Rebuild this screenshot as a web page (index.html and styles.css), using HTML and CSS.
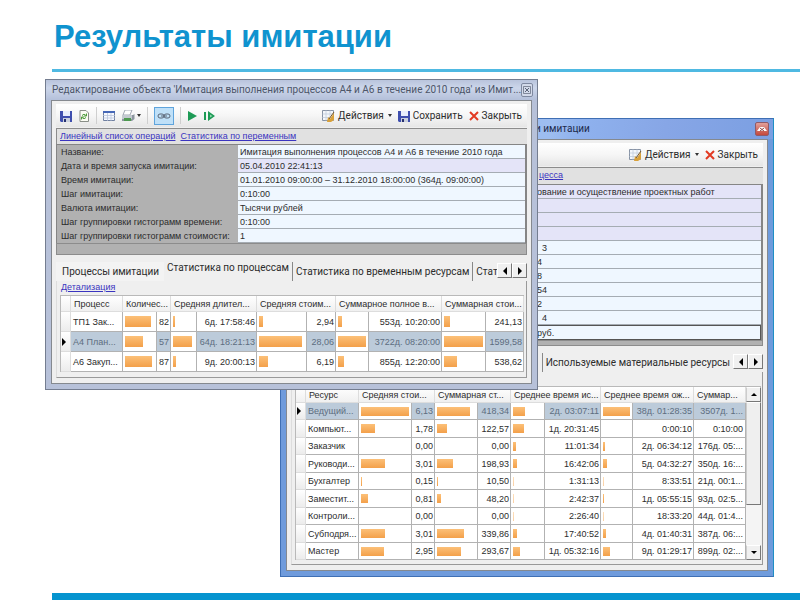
FILE: index.html
```
<!DOCTYPE html>
<html lang="ru">
<head>
<meta charset="utf-8">
<title>Результаты имитации</title>
<link rel="stylesheet" href="styles.css">
</head>
<body>
<svg class="sprite" aria-hidden="true">
  <symbol id="save" viewBox="0 0 12 12"><path d="M0 1h12v11H1L0 11z" fill="#3f4fae"/><path d="M3 1h7v5H3z" fill="#e8eefc"/><path d="M3 8h7v4H3z" fill="#c9cfdd"/><path d="M4 9h2v3H4z" fill="#26306f"/></symbol>
  <symbol id="refresh" viewBox="0 0 12 12"><path d="M2 .5h6l2.500 2.500v8.500H2z" fill="#fbfcf4" stroke="#8a8f88"/><path d="M4 5.500q2-2.500 4 0M8.500 3.500v2.500H6M8 7.500q-2 2.500-4 0M3.500 9.500V7H6" fill="none" stroke="#4c9a3a"/></symbol>
  <symbol id="grid" viewBox="0 0 12 12"><path d="M.5 1.500h11v9H.5z" fill="#f6f9ff" stroke="#6f7f9f"/><path d="M0 1h12v2H0z" fill="#4668b8"/><path d="M4.500 3v8M8 3v8M0 5.500h12M0 8h12" stroke="#b4c0d8" stroke-width=".7"/></symbol>
  <symbol id="print" viewBox="0 0 14 12"><path d="M4 0h7l-2 5H2z" fill="#fff" stroke="#8b93a1" stroke-width=".8"/><path d="M1 5h11l1.500-1v5L11 11H1z" fill="#8d96a0"/><path d="M1 5h10v4H1z" fill="#c3cad0"/><path d="M3 8h7v3H3z" fill="#4e9a50"/></symbol>
  <symbol id="link" viewBox="0 0 14 8"><rect x="1" y="2" width="6" height="4" rx="2" fill="none" stroke="#5b6677"/><rect x="7" y="2" width="6" height="4" rx="2" fill="none" stroke="#5b6677"/><path d="M4 4h6" stroke="#5b6677"/></symbol>
  <symbol id="play" viewBox="0 0 10 10"><path d="M1 0l9 5-9 5z" fill="#1d9a55"/></symbol>
  <symbol id="step" viewBox="0 0 12 10"><path d="M1 1h2v8H1zM5 0l7 5-7 5z" fill="#1d9a55"/><path d="M7 3.500L9.500 5 7 6.500z" fill="#8fd8ae"/></symbol>
  <symbol id="actions" viewBox="0 0 13 12"><path d="M.5 .5h11v10H.5z" fill="#f4f7fb" stroke="#8793a5"/><path d="M.5 4h11M.5 7.500h11M4 .5v10M8 .5v10" stroke="#c2cddd" stroke-width=".8"/><path d="M6 7l2 2 4-6v7l-3 2H5z" fill="#d9a13a"/><path d="M12 2L7 9" stroke="#7a5a2c"/></symbol>
  <symbol id="cross" viewBox="0 0 10 10"><path d="M1 1l8 8M9 1L1 9" stroke="#e23a22" stroke-width="2"/></symbol>
  <symbol id="frame-close" viewBox="0 0 8 8"><path d="M.5 .5h7v7h-7z" fill="none" stroke="#5b6477" stroke-width=".7"/><path d="M2 2l4 4M6 2L2 6" stroke="#5b6477"/></symbol>
  <symbol id="frame-close-active" viewBox="0 0 10 6"><path d="M0 5L3 1h4l3 4z" fill="#fff"/><path d="M3 2l4 3M7 2L3 5" stroke="#8d4a48"/></symbol>
</svg>

<div class="slide">
  <h1>Результаты имитации</h1>
  <main class="stage">

    <section class="window back">
      <header class="titlebar">
        <span class="caption">и имитации</span>
        <button class="close" aria-label="Закрыть окно"><svg width="10" height="6"><use href="#frame-close-active"/></svg></button>
      </header>
      <div class="client">
        <div class="toolbar">
          <div class="commands">
            <button><svg width="13" height="12"><use href="#actions"/></svg>Действия<i class="caret"></i></button>
            <button><svg width="10" height="10"><use href="#cross"/></svg>Закрыть</button>
          </div>
        </div>
        <nav class="links"><a href="#">цесса</a></nav>
        <table class="props">
          <tr class="fixed"><th></th><td>ование и осуществление проектных работ</td></tr>
          <tr class="fixed"><th></th><td></td></tr>
          <tr class="fixed"><th></th><td></td></tr>
          <tr class="fixed"><th></th><td></td></tr>
          <tr><th></th><td>&nbsp;&nbsp;3</td></tr>
          <tr><th></th><td>4</td></tr>
          <tr><th></th><td>8</td></tr>
          <tr><th></th><td>54</td></tr>
          <tr><th></th><td>2</td></tr>
          <tr><th></th><td>&nbsp;&nbsp;4</td></tr>
          <tr class="current"><th></th><td>руб.</td></tr>
        </table>
        <div class="filler"></div>
        <div class="tabs">
          <button class="divided">Используемые материальные ресурсы</button>
          <div class="scroller"><button aria-label="Назад"><i class="left"></i></button><button aria-label="Вперёд"><i class="right"></i></button></div>
        </div>
        <div class="page">
          <div class="sheet">
            <table class="data">
              <colgroup><col class="w10"><col class="w53"><col class="w53"><col class="w23"><col class="w43"><col class="w33"><col class="w34"><col class="w56"><col class="w32"><col class="w61"><col></colgroup>
              <thead><tr><th></th><th>Ресурс</th><th colspan="2">Средняя стои...</th><th colspan="2">Суммарная ст...</th><th colspan="2">Среднее время ис...</th><th colspan="2">Среднее время ож...</th><th>Суммар...</th></tr></thead>
              <tbody>
                <tr class="selected"><td><i class="marker"></i></td><td>Ведущий...</td><td><b style="width:48px"></b></td><td>6,13</td><td><b style="width:33px"></b></td><td>418,34</td><td><b style="width:12px"></b></td><td>2д. 03:07:11</td><td><b style="width:27px"></b></td><td>38д. 01:28:35</td><td>3507д. 1...</td></tr>
                <tr><td></td><td>Компьют...</td><td><b style="width:14px"></b></td><td>1,78</td><td><b style="width:10px"></b></td><td>122,57</td><td><b style="width:11px"></b></td><td>1д. 20:31:45</td><td></td><td>0:00:10</td><td>0:10:00</td></tr>
                <tr><td></td><td>Заказчик</td><td></td><td>0,00</td><td></td><td>0,00</td><td><b style="width:3px"></b></td><td>11:01:34</td><td><b style="width:2px"></b></td><td>2д. 06:34:12</td><td>176д. 05:...</td></tr>
                <tr><td></td><td>Руководи...</td><td><b style="width:24px"></b></td><td>3,01</td><td><b style="width:16px"></b></td><td>198,93</td><td><b style="width:4px"></b></td><td>16:42:06</td><td><b style="width:4px"></b></td><td>5д. 04:32:27</td><td>350д. 16:...</td></tr>
                <tr><td></td><td>Бухгалтер</td><td><b style="width:1px"></b></td><td>0,15</td><td><b style="width:1px"></b></td><td>10,50</td><td><b class="faint" style="width:1px"></b></td><td>1:31:13</td><td><b class="faint" style="width:1px"></b></td><td>8:33:51</td><td>21д. 00:1...</td></tr>
                <tr><td></td><td>Заместит...</td><td><b style="width:7px"></b></td><td>0,81</td><td><b style="width:4px"></b></td><td>48,20</td><td><b class="faint" style="width:1px"></b></td><td>2:42:37</td><td><b style="width:1px"></b></td><td>1д. 05:55:15</td><td>93д. 02:5...</td></tr>
                <tr><td></td><td>Контроли...</td><td></td><td>0,00</td><td></td><td>0,00</td><td><b class="faint" style="width:1px"></b></td><td>2:26:40</td><td><b class="faint" style="width:1px"></b></td><td>18:33:20</td><td>44д. 01:4...</td></tr>
                <tr><td></td><td>Субподря...</td><td><b style="width:24px"></b></td><td>3,01</td><td><b style="width:27px"></b></td><td>339,86</td><td><b style="width:4px"></b></td><td>17:40:52</td><td><b style="width:3px"></b></td><td>4д. 01:40:31</td><td>387д. 06:...</td></tr>
                <tr><td></td><td>Мастер</td><td><b style="width:23px"></b></td><td>2,95</td><td><b style="width:24px"></b></td><td>293,67</td><td><b style="width:7px"></b></td><td>1д. 05:32:16</td><td><b style="width:7px"></b></td><td>9д. 01:29:17</td><td>899д. 02:...</td></tr>
              </tbody>
            </table>
            <div class="scrollbar"><button aria-label="Вверх"><i class="up"></i></button><div class="thumb"></div><div class="track"></div><button aria-label="Вниз"><i class="down"></i></button></div>
          </div>
        </div>
      </div>
    </section>

    <section class="window front">
      <header class="titlebar">
        <span class="caption">Редактирование объекта 'Имитация выполнения процессов А4 и А6 в течение 2010 года' из Имит...</span>
        <button class="close" aria-label="Закрыть окно"><svg width="8" height="8"><use href="#frame-close"/></svg></button>
      </header>
      <div class="client">
        <div class="toolbar">
          <div class="tools">
            <button aria-label="Сохранить"><svg width="12" height="12"><use href="#save"/></svg></button>
            <button aria-label="Обновить"><svg width="12" height="12"><use href="#refresh"/></svg></button>
            <i class="sep"></i>
            <button aria-label="Таблица"><svg width="12" height="12"><use href="#grid"/></svg></button>
            <button aria-label="Печать"><svg width="14" height="12"><use href="#print"/></svg><i class="caret"></i></button>
            <i class="sep"></i>
            <button class="pressed" aria-label="Связь"><svg width="14" height="8"><use href="#link"/></svg></button>
            <i class="sep"></i>
            <button aria-label="Запуск"><svg width="10" height="10"><use href="#play"/></svg></button>
            <button aria-label="Шаг"><svg width="12" height="10"><use href="#step"/></svg></button>
          </div>
          <div class="commands">
            <button><svg width="13" height="12"><use href="#actions"/></svg>Действия<i class="caret"></i></button>
            <button><svg width="12" height="12"><use href="#save"/></svg>Сохранить</button>
            <button><svg width="10" height="10"><use href="#cross"/></svg>Закрыть</button>
          </div>
        </div>
        <nav class="links"><a href="#">Линейный список операций</a><a href="#">Статистика по переменным</a></nav>
        <table class="props">
          <tr><th>Название:</th><td>Имитация выполнения процессов А4 и А6 в течение 2010 года</td></tr>
          <tr class="fixed"><th>Дата и время запуска имитации:</th><td>05.04.2010 22:41:13</td></tr>
          <tr><th>Время имитации:</th><td>01.01.2010 09:00:00 – 31.12.2010 18:00:00 (364д. 09:00:00)</td></tr>
          <tr><th>Шаг имитации:</th><td>0:10:00</td></tr>
          <tr><th>Валюта имитации:</th><td>Тысячи рублей</td></tr>
          <tr><th>Шаг группировки гистограмм времени:</th><td>0:10:00</td></tr>
          <tr><th>Шаг группировки гистограмм стоимости:</th><td>1</td></tr>
        </table>
        <div class="filler"></div>
        <div class="tabs">
          <button class="first">Процессы имитации</button>
          <button class="active">Статистика по процессам</button>
          <button class="divided">Статистика по временным ресурсам</button>
          <button class="divided">Стат</button>
          <div class="scroller"><button aria-label="Назад"><i class="left"></i></button><button aria-label="Вперёд"><i class="right"></i></button></div>
        </div>
        <div class="page">
          <a class="detail" href="#">Детализация</a>
          <div class="sheet">
            <table class="data">
              <colgroup><col class="w10"><col class="w52"><col class="w34"><col class="w14"><col class="w26"><col class="w60"><col class="w50"><col class="w29"><col class="w33"><col class="w73"><col class="w44"><col></colgroup>
              <thead><tr><th></th><th>Процесс</th><th colspan="2">Количес...</th><th colspan="2">Средняя длител...</th><th colspan="2">Средняя стоим...</th><th colspan="2">Суммарное полное в...</th><th colspan="2">Суммарная стои...</th></tr></thead>
              <tbody>
                <tr><td></td><td>ТП1 Зак...</td><td><b style="width:26px"></b></td><td>82</td><td><b style="width:2px"></b></td><td>6д. 17:58:46</td><td><b style="width:4px"></b></td><td>2,94</td><td><b style="width:4px"></b></td><td>553д. 10:20:00</td><td><b style="width:6px"></b></td><td>241,13</td></tr>
                <tr class="selected"><td><i class="marker"></i></td><td>А4 План...</td><td><b style="width:18px"></b></td><td>57</td><td><b style="width:19px"></b></td><td>64д. 18:21:13</td><td><b style="width:43px"></b></td><td>28,06</td><td><b style="width:28px"></b></td><td>3722д. 08:20:00</td><td><b style="width:39px"></b></td><td>1599,58</td></tr>
                <tr><td></td><td>А6 Закуп...</td><td><b style="width:27px"></b></td><td>87</td><td><b style="width:3px"></b></td><td>9д. 20:00:13</td><td><b style="width:9px"></b></td><td>6,19</td><td><b style="width:6px"></b></td><td>855д. 12:20:00</td><td><b style="width:13px"></b></td><td>538,62</td></tr>
              </tbody>
            </table>
          </div>
        </div>
      </div>
    </section>

  </main>
  <footer></footer>
</div>
</body>
</html>
```

FILE: styles.css
```
* { box-sizing: border-box; }
body { margin: 0; background: #fff; font: 9px/12px "Liberation Sans", sans-serif; color: #2c2c2c; }
button { margin: 0; padding: 0; border: 0; background: none; color: inherit; font: inherit; }
svg { display: block; flex: none; }
.sprite { position: absolute; width: 0; height: 0; }

.slide { min-height: 100vh; display: flex; flex-direction: column; }
h1 { margin: 0 0 0 52px; padding: 18px 0 13px 2px; border-bottom: 3px solid #4fb9e2; font-size: 31px; line-height: 38px; color: #0f93cf; }
footer { margin-left: 52px; height: 7px; background: #0594cf; }

.stage { flex: 1; display: grid; grid-template-columns: minmax(0, 1fr); align-items: start; }
.window { grid-area: 1 / 1; padding: 0 5px 5px; border: 1px solid #747d90; }
.front { margin: 7px 262px 0 45px; background: #b7c1d9; }
.back { margin: 46px 26px 16px 280px; background: #6f9bdc; border-color: #3f6fb4; border-right-color: #1f8fc4; }
.titlebar { display: flex; align-items: center; justify-content: space-between; height: 20px; margin: 0 -5px; padding: 0 4px 0 6px; font: 10px/14px Roboto, sans-serif; color: #4c5568; }
.front .titlebar { background: linear-gradient(#b9c4dc, #ccd6ea 40%, #b4c0da); }
.back .titlebar { padding-left: 254px; background: linear-gradient(100deg, #9dbdf0 55%, #8fb2ee 60%, #87a6e6 78%, #7b9fe2); color: #1d2a4c; }
.caption { white-space: nowrap; }
.close { display: flex; align-items: center; justify-content: center; width: 14px; height: 14px; border: 1px solid #7f89a0; border-radius: 2px; background: #d3daea; }
.back .close { border-color: #8f5a68; background: linear-gradient(#e2a09a, #c4483c); }

.client { padding: 3px 4px 5px; border: 1px solid #85898f; background: #efefef; }
.toolbar { display: flex; align-items: center; justify-content: space-between; height: 23px; padding: 0 5px 0 4px; background: linear-gradient(#fff, #f6f6f6 50%, #e6e6e6); font: 10px/14px Roboto, sans-serif; }
.back .toolbar { justify-content: flex-end; }
.tools, .commands { display: flex; align-items: center; gap: 6px; }
.toolbar button { display: flex; align-items: center; gap: 3px; }
.tools button { gap: 1px; }
.sep { width: 1px; height: 17px; background: #cfcfcf; }
.toolbar .pressed { width: 20px; height: 18px; justify-content: center; border: 1px solid #5fa4dc; background: #bfe0f8; }
.caret { border: 2px solid transparent; border-top: 3px solid #333; border-bottom: 0; margin-left: 1px; }

.links { display: flex; gap: 5px; height: 16px; margin-top: 1px; padding: 1px 3px 0; border: 1px solid #8c8c8c; border-right: 0; border-bottom: 0; background: #e1e1e1; }
a { color: #3a34c0; }
.back .links { height: 17px; padding-left: 247px; }

table { width: 100%; table-layout: fixed; border-collapse: separate; border-spacing: 0; }
.props { border: 1px solid #858585; border-right-width: 2px; border-bottom: 0; background: #b1b1b1; }
.props th, .props td { height: 14px; padding: 0 2px; line-height: 12px; font-weight: normal; text-align: left; white-space: nowrap; overflow: hidden; }
.props th { width: 181px; padding: 0 0 0 4px; }
.props td { border-bottom: 1px solid #a5acb3; background: #eff7ff; }
.back .props th { width: 243px; }
.fixed td { background: #e4e4f8; }
.props .current td { height: 15px; border: 1px solid #555; border-left: 0; }
.filler { height: 12px; border: 1px solid #8c8c8c; background: #b1b1b1; }
.back .filler { height: 6px; }

.tabs { display: flex; align-items: flex-end; height: 26px; font: 10px/14px Roboto, sans-serif; }
.tabs > button { flex: none; height: 19px; padding: 0 5px 0 6px; white-space: nowrap; }
.tabs .first { background: #f3f3f3; }
.tabs .active { height: 22px; padding: 0 3px 4px; }
.tabs .divided { padding: 0 3px; border-left: 1px solid #888; }
.tabs .divided + .divided { flex: 0 1 auto; min-width: 0; padding-right: 0; overflow: hidden; text-align: left; }
.scroller { flex: none; display: flex; margin-left: auto; padding-bottom: 3px; }
.scroller button { display: flex; align-items: center; justify-content: center; width: 15px; height: 15px; border: 1px solid; border-color: #fff #777 #777 #fff; background: #f0f0f0; }
.back .tabs { justify-content: flex-end; }
.back .scroller { margin-left: 0; }
.left, .right { border: 4px solid transparent; }
.left { border-right-color: #000; border-left: 0; }
.right { border-left-color: #000; border-right: 0; }
.up, .down { border: 3px solid transparent; }
.up { border-bottom-color: #000; border-top: 0; }
.down { border-top-color: #000; border-bottom: 0; }

.page { padding: 0 2px 5px 3px; border: 1px solid #999; border-top: 0; border-left-color: #ddd; }
.detail { display: block; height: 14px; padding-left: 1px; }
.back .page { padding: 14px 1px 4px 3px; }
.sheet { display: flex; border: solid #b9b9b9; border-width: 1px 0 0 1px; background: #fff; }

.data { flex: 1; width: auto; min-width: 0; }
.data th, .data td { height: 20px; padding: 0 1px; border: solid #b2b2b2; border-width: 0 1px 1px 0; font-weight: normal; line-height: 12px; text-align: right; white-space: nowrap; overflow: hidden; }
.data th { height: 16px; padding-left: 3px; border-color: #ddd; background: linear-gradient(#fff, #f0f0f0); text-align: left; }
.data td:first-child { border-color: #ddd; background: linear-gradient(#fff, #ececec); }
.data td:nth-child(2) { padding-left: 2px; text-align: left; }
.back .data td { height: 17px; }
.back .data tr:nth-child(even) td { height: 18px; }
.back .data td:last-child { padding-right: 2px; }
.selected td { background: #bccbda; color: #5c6d80; }
.selected td:has(b) { background: #fff; }
.data b { display: block; height: 11px; margin-left: 1px; background: linear-gradient(#fcc078, #f3a04a); }
.back .data b { height: 9px; }
.data .faint { opacity: .5; }
.marker { display: block; width: 0; border: 4px solid transparent; border-left-color: #000; border-right: 0; }

.scrollbar { flex: 0 0 15px; display: flex; flex-direction: column; background: #f4f4f4; }
.scrollbar button { display: flex; align-items: center; justify-content: center; height: 15px; border: 1px solid; border-color: #fff #777 #777 #ccc; background: #f0f0f0; }
.thumb { flex: 5; border: 1px solid; border-color: #fff #777 #777 #ccc; background: #efefef; }
.track { flex: 2; }

.w10 { width: 10px; } .w14 { width: 14px; } .w23 { width: 23px; } .w26 { width: 26px; }
.w29 { width: 29px; } .w32 { width: 32px; } .w33 { width: 33px; } .w34 { width: 34px; }
.w43 { width: 43px; } .w44 { width: 44px; } .w50 { width: 50px; } .w52 { width: 52px; }
.w53 { width: 53px; } .w56 { width: 56px; } .w60 { width: 60px; } .w61 { width: 61px; }
.w73 { width: 73px; }
```
